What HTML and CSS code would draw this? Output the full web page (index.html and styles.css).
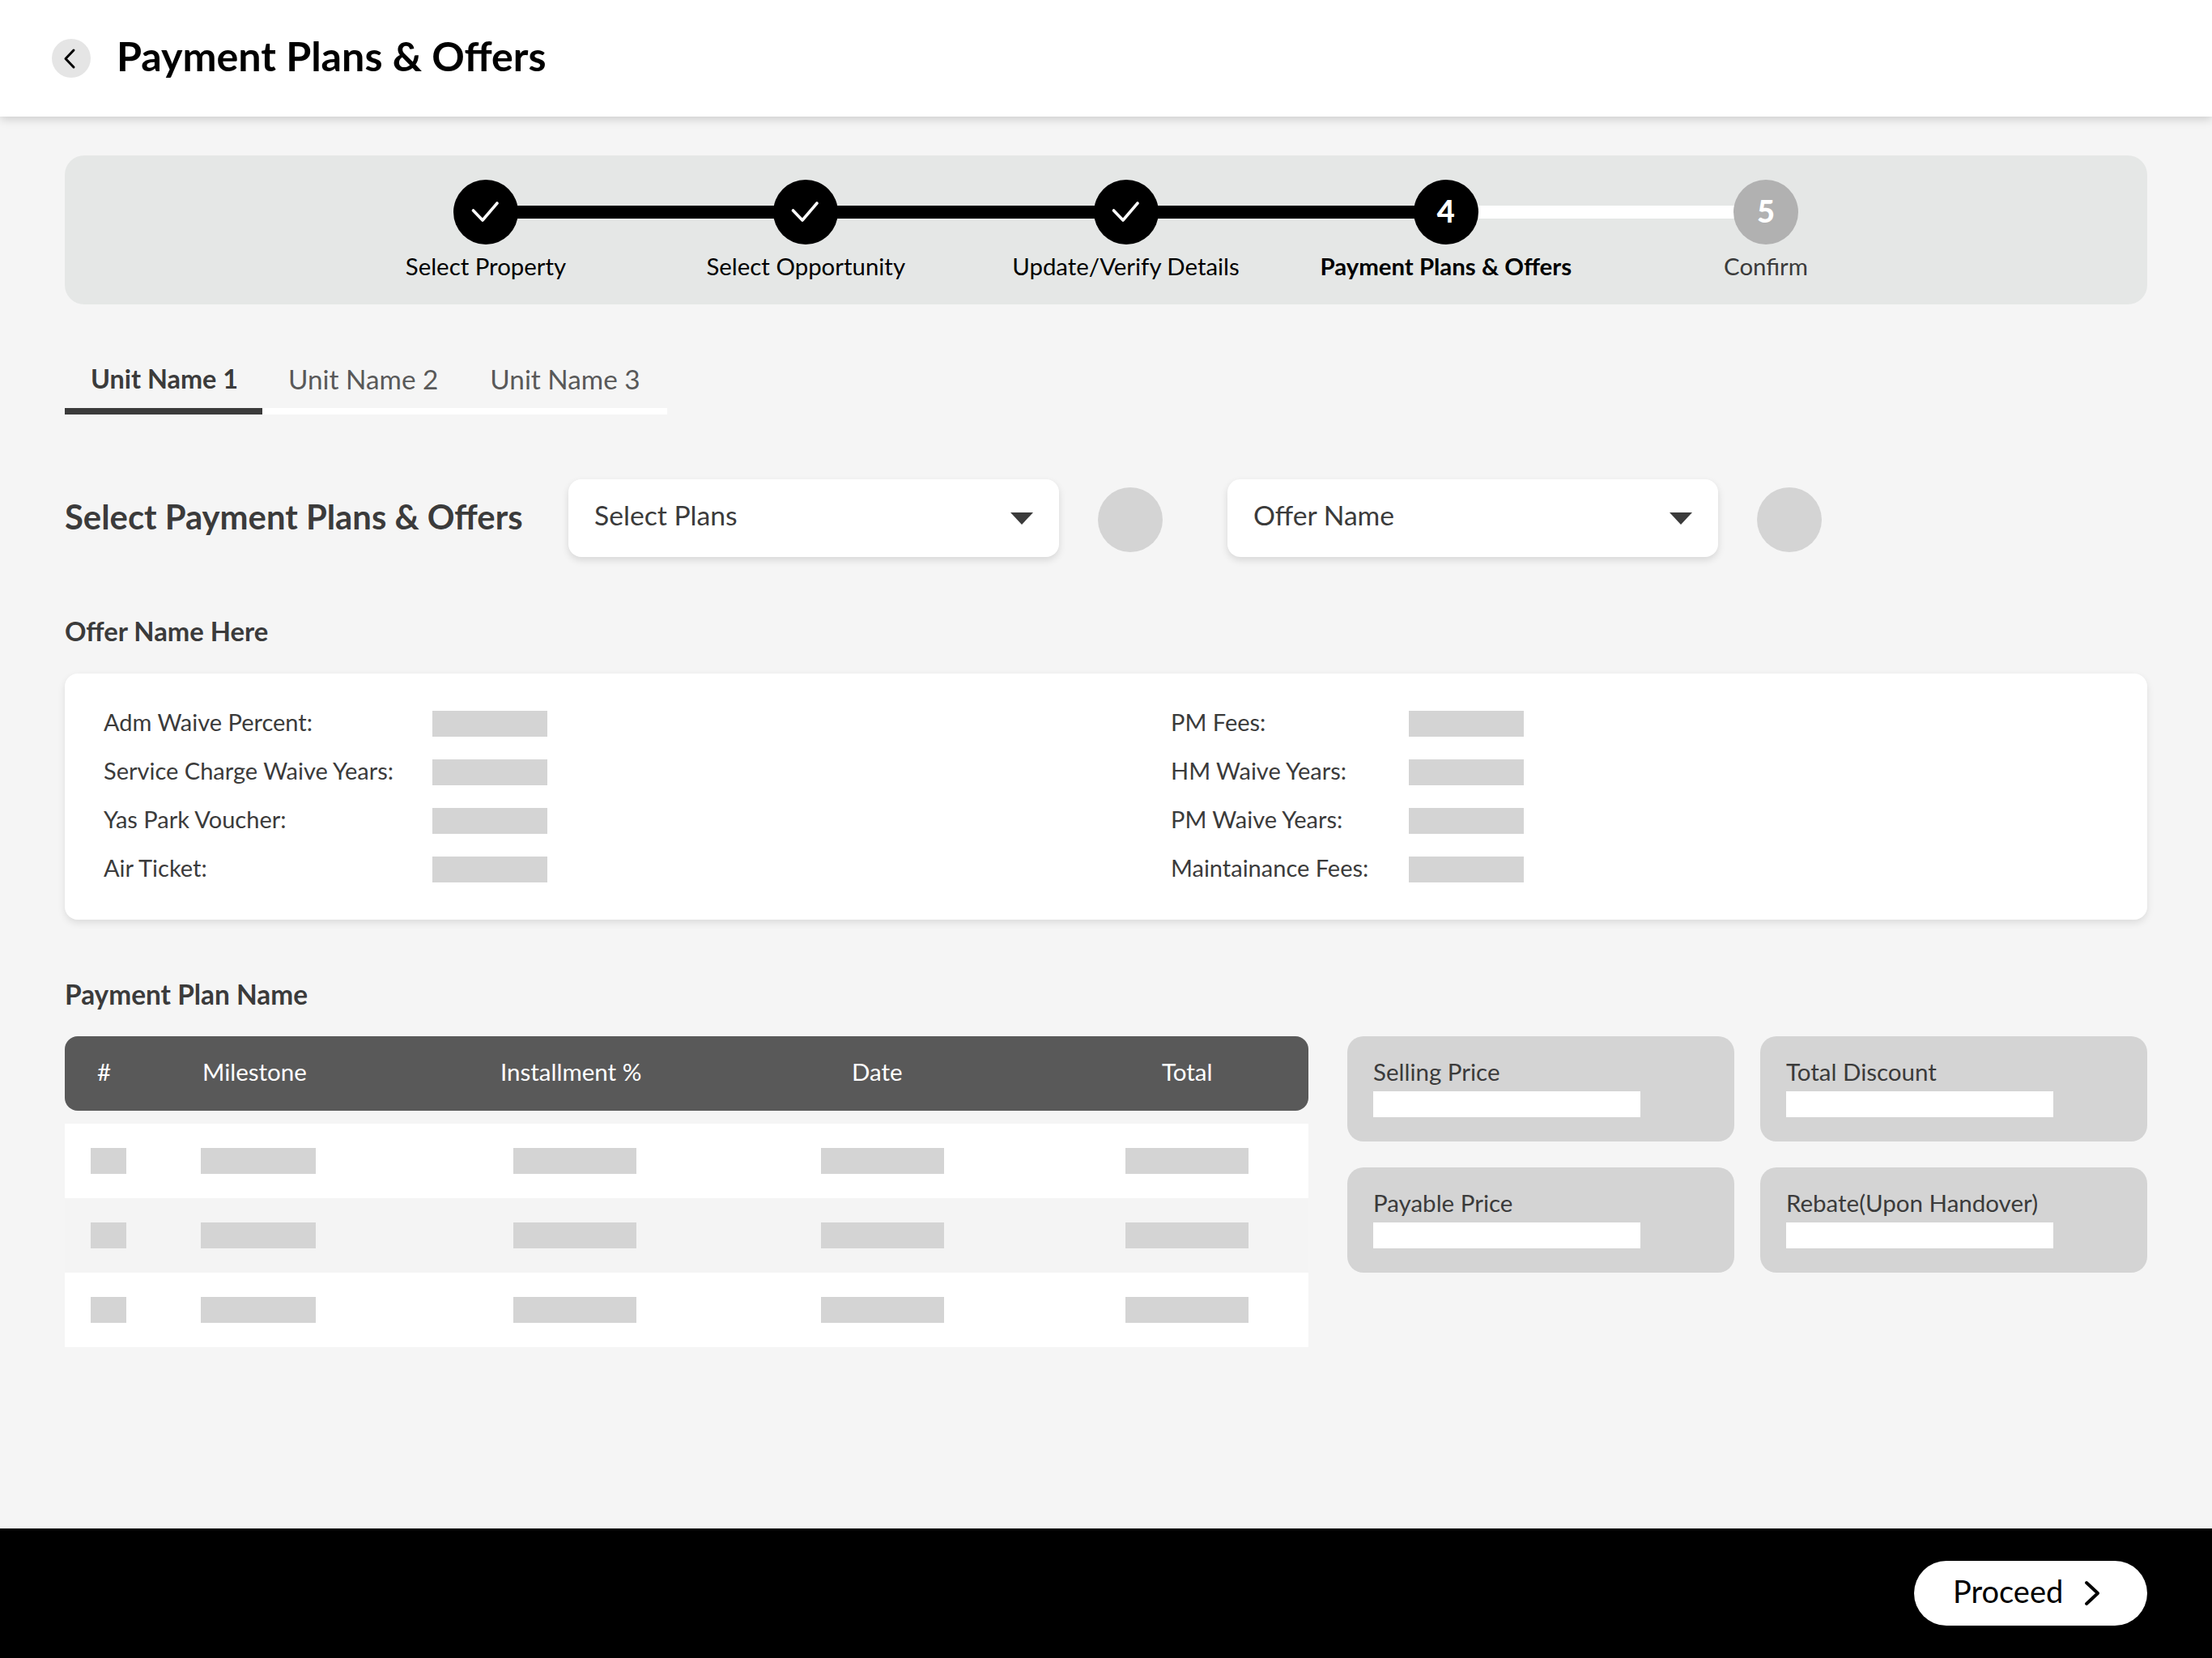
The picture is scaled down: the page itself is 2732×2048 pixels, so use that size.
FILE: index.html
```html
<!DOCTYPE html>
<html lang="en">
<head>
<meta charset="utf-8">
<title>Payment Plans &amp; Offers</title>
<link rel="stylesheet" href="styles.css">
</head>
<body>
<header class="topbar">
  <button class="back" aria-label="Back">
    <svg width="48" height="48" viewBox="0 0 48 48"><path d="M27 14 L17 24.5 L27 35" fill="none" stroke="#000" stroke-width="3" stroke-linecap="round" stroke-linejoin="round"/></svg>
  </button>
  <h1 class="title">Payment Plans &amp; Offers</h1>
</header>
<main class="main">
  <section class="stepper">
    <div class="step done">
      <span class="dot"><svg width="80" height="80" viewBox="0 0 80 80"><path d="M24.5 38 L36 50 L54 29" fill="none" stroke="#fff" stroke-width="3.6" stroke-linecap="round" stroke-linejoin="round"/></svg></span>
      <span class="step-label">Select Property</span>
    </div>
    <div class="step done">
      <span class="dot"><svg width="80" height="80" viewBox="0 0 80 80"><path d="M24.5 38 L36 50 L54 29" fill="none" stroke="#fff" stroke-width="3.6" stroke-linecap="round" stroke-linejoin="round"/></svg></span>
      <span class="step-label">Select Opportunity</span>
    </div>
    <div class="step done">
      <span class="dot"><svg width="80" height="80" viewBox="0 0 80 80"><path d="M24.5 38 L36 50 L54 29" fill="none" stroke="#fff" stroke-width="3.6" stroke-linecap="round" stroke-linejoin="round"/></svg></span>
      <span class="step-label">Update/Verify Details</span>
    </div>
    <div class="step current">
      <span class="dot">4</span>
      <span class="step-label">Payment Plans &amp; Offers</span>
    </div>
    <div class="step todo">
      <span class="dot">5</span>
      <span class="step-label">Confirm</span>
    </div>
  </section>

  <nav class="tabs">
    <span class="tab active">Unit Name 1</span>
    <span class="tab">Unit Name 2</span>
    <span class="tab">Unit Name 3</span>
  </nav>

  <section class="select-row">
    <h2 class="select-heading">Select Payment Plans &amp; Offers</h2>
    <div class="select"><span>Select Plans</span><i class="caret"></i></div>
    <span class="round"></span>
    <div class="select second"><span>Offer Name</span><i class="caret"></i></div>
    <span class="round"></span>
  </section>

  <h3 class="subhead offer-head">Offer Name Here</h3>
  <section class="offer-card">
    <div class="offer-col left">
      <span class="lbl">Adm Waive Percent:</span><span class="bar"></span>
      <span class="lbl">Service Charge Waive Years:</span><span class="bar"></span>
      <span class="lbl">Yas Park Voucher:</span><span class="bar"></span>
      <span class="lbl">Air Ticket:</span><span class="bar"></span>
    </div>
    <div class="offer-col right">
      <span class="lbl">PM Fees:</span><span class="bar"></span>
      <span class="lbl">HM Waive Years:</span><span class="bar"></span>
      <span class="lbl">PM Waive Years:</span><span class="bar"></span>
      <span class="lbl">Maintainance Fees:</span><span class="bar"></span>
    </div>
  </section>

  <h3 class="subhead plan-head">Payment Plan Name</h3>
  <section class="plan">
    <div class="table">
      <div class="thead"><span>#</span><span>Milestone</span><span>Installment %</span><span>Date</span><span>Total</span></div>
      <div class="trow"><span class="bar b-num"></span><span class="bar"></span><span class="bar b-wide"></span><span class="bar b-wide"></span><span class="bar b-wide"></span></div>
      <div class="trow alt"><span class="bar b-num"></span><span class="bar"></span><span class="bar b-wide"></span><span class="bar b-wide"></span><span class="bar b-wide"></span></div>
      <div class="trow"><span class="bar b-num"></span><span class="bar"></span><span class="bar b-wide"></span><span class="bar b-wide"></span><span class="bar b-wide"></span></div>
    </div>
    <div class="prices">
      <div class="price"><span class="price-label">Selling Price</span><span class="price-value"></span></div>
      <div class="price"><span class="price-label">Total Discount</span><span class="price-value"></span></div>
      <div class="price"><span class="price-label">Payable Price</span><span class="price-value"></span></div>
      <div class="price"><span class="price-label">Rebate(Upon Handover)</span><span class="price-value"></span></div>
    </div>
  </section>
</main>
<footer class="footer">
  <button class="proceed"><span>Proceed</span>
    <svg width="20" height="32" viewBox="0 0 20 32"><path d="M3 3 L17 16 L3 29" fill="none" stroke="#000" stroke-width="4" stroke-linecap="round" stroke-linejoin="round"/></svg>
  </button>
</footer>
</body>
</html>
```

FILE: styles.css
```css
* { box-sizing: border-box; }
html, body { margin: 0; padding: 0; }
body {
  width: 2732px;
  height: 2048px;
  overflow: hidden;
  display: flex;
  flex-direction: column;
  background: #f5f5f5;
  font-family: "Lato", "Liberation Sans", sans-serif;
  color: #3b3b3b;
}
.topbar {
  flex: none;
  height: 144px;
  padding: 0 0 0 64px;
  display: flex;
  align-items: center;
  gap: 32px;
  background: #fff;
  box-shadow: 0 2px 12px rgba(0, 0, 0, .2);
  position: relative;
  z-index: 1;
}
.back {
  width: 48px;
  height: 48px;
  padding: 0;
  border: 0;
  border-radius: 50%;
  background: #e5e5e5;
  display: block;
}
.back svg { display: block; }
.title { margin: 0 0 6px; font-size: 50.2px; line-height: 1; font-weight: 700; color: #000; }

.main { flex: 1; padding: 48px 80px 0; min-height: 0; }

.stepper {
  height: 184px;
  padding: 30px 0 0 322.4px;
  background: #e5e7e6;
  border-radius: 24px;
  display: grid;
  grid-template-columns: repeat(5, 395.25px);
}
.step {
  position: relative;
  display: flex;
  flex-direction: column;
  align-items: center;
}
.step:not(:last-child)::after {
  content: "";
  position: absolute;
  left: 50%;
  top: 32px;
  width: 100%;
  height: 16px;
  background: #000;
}
.step.current::after { background: #fff; }
.dot {
  position: relative;
  z-index: 1;
  width: 80px;
  height: 80px;
  padding-bottom: 5px;
  border-radius: 50%;
  background: #000;
  color: #fff;
  display: flex;
  align-items: center;
  justify-content: center;
  font-size: 38px;
  font-weight: 900;
}
.done .dot { padding: 0; }
.dot svg { display: block; }
.todo .dot { background: #b1b1b1; }
.step-label {
  margin-top: 9px;
  font-size: 29.4px;
  line-height: 36px;
  color: #000;
  white-space: nowrap;
}
.current .step-label { font-weight: 700; }
.todo .step-label { color: #3b3b3b; }

.tabs {
  margin-top: 64px;
  width: 744px;
  height: 72px;
  display: flex;
  border-bottom: 8px solid #fff;
}
.tab {
  padding: 0 32px;
  height: 72px;
  font-size: 33.3px;
  line-height: 56px;
  color: #595959;
  white-space: nowrap;
}
.tab.active {
  padding-right: 30px;
  font-size: 32.4px;
  font-weight: 700;
  color: #3b3b3b;
  border-bottom: 8px solid #3b3b3b;
}

.select-row {
  margin-top: 80px;
  height: 96px;
  display: flex;
  align-items: flex-start;
}
.select-heading {
  margin: 0 57px 0 0;
  width: 565px;
  flex: none;
  font-size: 41.8px;
  line-height: 92px;
  font-weight: 700;
  white-space: nowrap;
}
.select {
  width: 606px;
  height: 96px;
  padding: 0 32px 8px 32px;
  background: #fff;
  border-radius: 16px;
  box-shadow: 0 4px 10px rgba(0, 0, 0, .12);
  display: flex;
  align-items: center;
  justify-content: space-between;
  font-size: 33.7px;
}
.select.second { margin-left: 80px; }
.caret {
  width: 0;
  height: 0;
  border-left: 14px solid transparent;
  border-right: 14px solid transparent;
  border-top: 15px solid #3b3b3b;
  margin-top: 9px;
}
.round {
  flex: none;
  width: 80px;
  height: 80px;
  margin: 10px 0 0 48px;
  border-radius: 50%;
  background: #d4d4d4;
}

.subhead { margin: 0; font-size: 32.8px; line-height: 40px; font-weight: 700; color: #3b3b3b; }
.offer-head { margin-top: 72px; }
.offer-card {
  margin-top: 32px;
  height: 304px;
  padding: 46px 48px;
  background: #fff;
  border-radius: 16px;
  box-shadow: 0 4px 10px rgba(0, 0, 0, .1);
  display: flex;
}
.offer-col {
  display: grid;
  grid-auto-rows: 32px;
  row-gap: 28px;
  align-items: center;
}
.offer-col.left { width: 1318px; grid-template-columns: 406px 142px; }
.offer-col.right { grid-template-columns: 294px 142px; }
.lbl { font-size: 29px; line-height: 28px; height: 32px; white-space: nowrap; }
.bar { display: block; width: 142px; height: 32px; background: #d4d4d4; }

.plan-head { margin-top: 72px; font-size: 33.4px; }
.plan { margin-top: 32px; display: flex; gap: 48px; align-items: flex-start; }
.table { width: 1536px; flex: none; }
.thead {
  height: 92px;
  padding: 0 0 5px 40px;
  display: grid;
  grid-template-columns: 130px 368px 434px 383px 1fr;
  align-items: center;
  background: #595959;
  border-radius: 16px;
  margin-bottom: 16px;
  color: #fff;
  font-size: 29.5px;
}
.trow {
  height: 92px;
  padding-left: 32px;
  display: grid;
  grid-template-columns: 136px 386px 380px 376px 152px;
  align-items: center;
  background: #fff;
}
.trow.alt { background: #f4f4f4; }
.b-num { width: 44px; }
.b-wide { width: 152px; }

.prices {
  flex: 1;
  display: grid;
  grid-template-columns: 478px 478px;
  grid-auto-rows: 130px;
  gap: 32px;
}
.price {
  padding: 27px 32px 0;
  background: #d4d4d4;
  border-radius: 20px;
  display: flex;
  flex-direction: column;
  align-items: flex-start;
}
.price-label { font-size: 29.5px; line-height: 34px; height: 41px; white-space: nowrap; }
.price-value { width: 330px; height: 32px; background: #fff; }

.footer {
  flex: none;
  height: 160px;
  background: #000;
  padding: 40px 80px 0 0;
  display: flex;
  justify-content: flex-end;
  align-items: flex-start;
}
.proceed {
  width: 288px;
  height: 80px;
  padding: 0 0 0 48px;
  border: 0;
  border-radius: 40px;
  background: #fff;
  color: #000;
  font-family: inherit;
  font-size: 38px;
  display: flex;
  align-items: center;
  gap: 26px;
}
.proceed span { margin-bottom: 6px; }
.proceed svg { display: block; }
```
